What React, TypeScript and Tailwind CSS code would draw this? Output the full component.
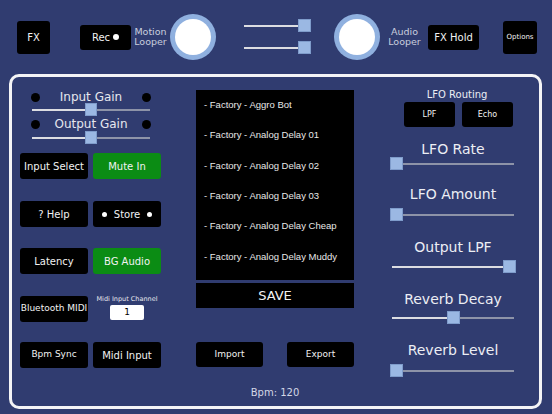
import React from "react";

const label = "font-['DejaVu_Sans',sans-serif]";

type BtnProps = { text: React.ReactNode; w?: string; h?: string; green?: boolean; size?: string };

const Btn = ({ text, w = "w-[68px]", h = "h-[26px]", green, size = "text-[10px]" }: BtnProps) => (
    <button
        className={`${w} ${h} ${size} ${label} flex items-center justify-center rounded-[3px] text-[#f2f2f2] ${
            green ? "bg-[#0b8c14]" : "bg-black"
        }`}
    >
        {text}
    </button>
);

// horizontal fader: light line left of the thumb, grey line after it
const Fader = ({ w, value, thumb = 13 }: { w: number; value: number; thumb?: number }) => {
    const left = value * (w - thumb);
    return (
        <div className="relative h-[12px]" style={{ width: w }}>
            <div className="absolute top-[5px] left-[2px] right-[2px] h-[2px] bg-[#8d93a8]" />
            <div className="absolute top-[5px] left-[2px] h-[2px] bg-[#dcdde2]" style={{ width: left + thumb / 2 }} />
            <div
                className="absolute top-[-1px] h-[13px] bg-[#9bb8e3] border border-[#7f9ccb]"
                style={{ left, width: thumb }}
            />
        </div>
    );
};

const Knob = () => (
    <div className="w-[46px] h-[46px] rounded-full bg-[#8fb0df] flex items-center justify-center shrink-0">
        <div className="w-[36px] h-[36px] rounded-full bg-white" />
    </div>
);

const Dot = () => <div className="w-[9px] h-[9px] rounded-full bg-black" />;

const GainRow = ({ title }: { title: string }) => (
    <div className="ml-[10px] w-[122px] h-[14px] flex items-center justify-between px-[1px]">
        <Dot />
        <span className={`${label} text-[12px] text-[#e6e7ee] leading-none`}>{title}</span>
        <Dot />
    </div>
);

type RightFaderProps = { title: string; value: number; gap: string; sliderGap: string };

const RightFader = ({ title, value, gap, sliderGap }: RightFaderProps) => (
    <>
        <div className={`${label} ${gap} h-[18px] flex items-center justify-center text-[14px] text-[#eceef4]`}>
            {title}
        </div>
        <div className={sliderGap}>
            <Fader w={126} value={value} />
        </div>
    </>
);

const presets = [
    "- Factory - Aggro Bot",
    "- Factory - Analog Delay 01",
    "- Factory - Analog Delay 02",
    "- Factory - Analog Delay 03",
    "- Factory - Analog Delay Cheap",
    "- Factory - Analog Delay Muddy",
];

export default function App() {
    return (
        <div className="w-[552px] h-[414px] bg-[#303c70] overflow-hidden">
            {/* transport bar */}
            <header className="h-[74px] flex flex-row items-center pl-[17px]">
                <Btn text="FX" w="w-[33px]" h="h-[33px]" size="text-[10px]" />
                <div className="ml-[30px]">
                    <Btn
                        w="w-[51px]"
                        h="h-[25px]"
                        text={
                            <span className="flex items-center gap-[3px]">
                                Rec <span className="w-[6px] h-[6px] rounded-full bg-white" />
                            </span>
                        }
                    />
                </div>
                <div className={`${label} ml-[3px] w-[33px] text-[9.5px] leading-[10px] text-[#c9cede] text-center`}>
                    Motion
                    <br />
                    Looper
                </div>
                <div className="ml-[3px]">
                    <Knob />
                </div>
                <div className="ml-[26px] flex flex-col gap-[10px]">
                    <Fader w={69} value={1} thumb={13} />
                    <Fader w={69} value={1} thumb={13} />
                </div>
                <div className="ml-[23px]">
                    <Knob />
                </div>
                <div className={`${label} ml-[8px] w-[33px] text-[9.5px] leading-[10px] text-[#c9cede] text-center`}>
                    Audio
                    <br />
                    Looper
                </div>
                <div className="ml-[7px]">
                    <Btn text="FX Hold" w="w-[51px]" h="h-[25px]" />
                </div>
                <div className="ml-[24px]">
                    <Btn text="Options" w="w-[34px]" h="h-[33px]" size="text-[7px]" />
                </div>
            </header>

            <main className="ml-[9px] w-[533px] h-[335px] border-[3px] border-[#f4f4f6] rounded-[10px] flex flex-row">
                {/* gain, inputs, midi */}
                <section className="pl-[8px] w-[150px] pt-[13px] flex flex-col">
                    <GainRow title="Input Gain" />
                    <div className="ml-[10px]">
                        <Fader w={122} value={0.5} thumb={12} />
                    </div>
                    <div className="mt-[1px]">
                        <GainRow title="Output Gain" />
                    </div>
                    <div className="ml-[10px] mt-[1px]">
                        <Fader w={122} value={0.5} thumb={12} />
                    </div>
                    <div className="mt-[9px] flex gap-[5px]">
                        <Btn text="Input Select" />
                        <Btn text="Mute In" green />
                    </div>
                    <div className="mt-[22px] flex gap-[5px]">
                        <Btn text="? Help" />
                        <Btn
                            text={
                                <span className="flex items-center gap-[7px]">
                                    <span className="w-[5px] h-[5px] rounded-full bg-white" />
                                    Store
                                    <span className="w-[5px] h-[5px] rounded-full bg-white" />
                                </span>
                            }
                        />
                    </div>
                    <div className="mt-[21px] flex gap-[5px]">
                        <Btn text="Latency" />
                        <Btn text="BG Audio" green />
                    </div>
                    <div className="mt-[22px] flex gap-[5px]">
                        <Btn text="Bluetooth MIDI" size="text-[9px]" />
                        <div className="w-[68px] flex flex-col items-center">
                            <span className={`${label} text-[6.5px] leading-[8px] text-[#e6e7ee] mt-[-1px]`}>
                                Midi Input Channel
                            </span>
                            <div
                                className={`${label} mt-[2px] w-[34px] h-[15px] bg-white rounded-[2px] text-[9px] flex items-center justify-center text-black`}
                            >
                                1
                            </div>
                        </div>
                    </div>
                    <div className="mt-[20px] flex gap-[5px]">
                        <Btn text="Bpm Sync" size="text-[9px]" />
                        <Btn text="Midi Input" />
                    </div>
                </section>

                {/* preset browser */}
                <section className="ml-[34px] w-[158px] pt-[13px] flex flex-col">
                    <ul className="h-[190px] bg-black font-['Liberation_Sans',sans-serif] text-[9.5px] text-[#e8e8e8]">
                        {presets.map((p) => (
                            <li key={p} className="h-[30.3px] flex items-center pl-[8px]">
                                {p}
                            </li>
                        ))}
                    </ul>
                    <button
                        className={`${label} mt-[3px] h-[25px] bg-black text-[13px] text-[#f2f2f2] flex items-center justify-center`}
                    >
                        SAVE
                    </button>
                    <div className="mt-[34px] flex justify-between">
                        <Btn text="Import" w="w-[67px]" h="h-[25px]" size="text-[9px]" />
                        <Btn text="Export" w="w-[67px]" h="h-[25px]" size="text-[9px]" />
                    </div>
                    <div className={`${label} mt-[18px] h-[14px] text-center text-[10px] text-[#d3d7e6]`}>Bpm: 120</div>
                </section>

                {/* lfo + fx params */}
                <section className="ml-[36px] w-[126px] pt-[10px] flex flex-col">
                    <div className={`${label} h-[14px] text-center text-[10px] text-[#eceef4] ml-[8px]`}>LFO Routing</div>
                    <div className="mt-[1px] ml-[14px] flex gap-[7px]">
                        <Btn text="LPF" w="w-[51px]" h="h-[25px]" size="text-[8px]" />
                        <Btn text="Echo" w="w-[51px]" h="h-[25px]" size="text-[8px]" />
                    </div>
                    <RightFader title="LFO Rate" value={0} gap="mt-[13px]" sliderGap="mt-0" />
                    <RightFader title="LFO Amount" value={0} gap="mt-[15px]" sliderGap="mt-[6px]" />
                    <RightFader title="Output LPF" value={1} gap="mt-[17px]" sliderGap="mt-[5px]" />
                    <RightFader title="Reverb Decay" value={0.5} gap="mt-[17px]" sliderGap="mt-[4px]" />
                    <RightFader title="Reverb Level" value={0} gap="mt-[17px]" sliderGap="mt-[6px]" />
                </section>
            </main>
        </div>
    );
}
